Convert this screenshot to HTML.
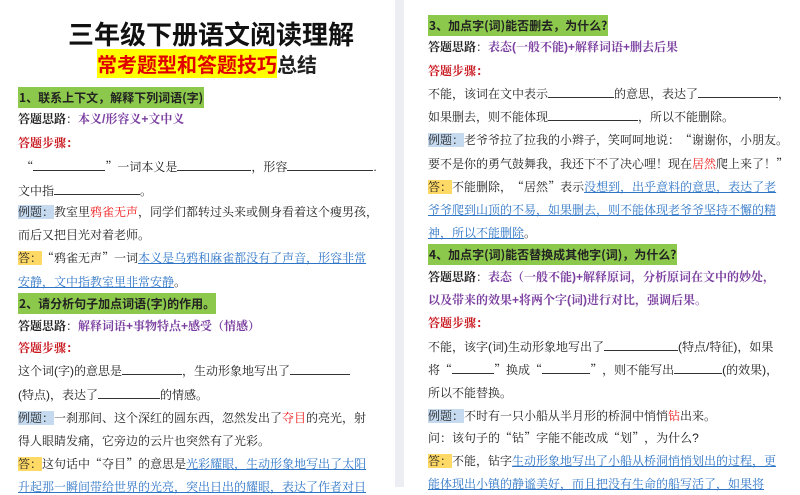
<!DOCTYPE html>
<html><head><meta charset="utf-8"><style>
*{margin:0;padding:0;box-sizing:border-box}
body{width:800px;height:487px;overflow:hidden;background:#fff;position:relative;font-family:"Liberation Sans","Noto Serif CJK SC","Noto Sans CJK SC",serif;font-size:12px;color:#222}
.gut{position:absolute;left:395px;top:0;width:9px;height:487px;background:#eceef3}
.l{position:absolute;white-space:nowrap;line-height:16px}
.L{left:18px}.R{left:428px}
.h{background:#8cc84b;font-weight:bold;font-family:"Noto Sans CJK SC",sans-serif;padding:2px 1px}
.p{color:#7b3fa0;font-weight:bold}
.r{color:#c8161d;font-weight:bold}
.red{color:#f01818}
.ex{background:#c5d9ef}
.an{background:#ffd966}
.b{color:#2e75c6;text-decoration:underline}
.u{display:inline-block;border-bottom:1px solid #333;height:12px;vertical-align:baseline}
.bd{font-weight:bold}
.q{font-family:"Noto Serif CJK SC",serif}
</style></head><body>
<div class="gut"></div>
<div class="l" style="left:68px;top:18px;font-size:26px;line-height:32px;font-weight:bold;font-family:'Noto Sans CJK SC',sans-serif;color:#111">三年级下册语文阅读理解</div>
<div class="l" style="left:97px;top:51px;font-size:20px;line-height:26px;font-weight:bold;font-family:'Noto Sans CJK SC',sans-serif"><span style="background:#ffff00;color:#e00000">常考题型和答题技巧</span>总结</div>
<div class="l L" style="top:90px"><span class="h">1、联系上下文，解释下列词语(字)</span></div>
<div class="l L" style="top:111px"><span class="bd">答题思路</span>：<span class="p">本义/形容义+文中义</span></div>
<div class="l L" style="top:135px"><span class="r">答题步骤：</span></div>
<div class="l L" style="top:159px">&nbsp;<span class="q">“</span><span class="u" style="width:72px"></span><span class="q">”</span>一词本义是<span class="u" style="width:74px"></span>，形容<span class="u" style="width:86px"></span>.</div>
<div class="l L" style="top:183px">文中指<span class="u" style="width:86px"></span>。</div>
<div class="l L" style="top:204px"><span class="ex">例题：</span>教室里<span class="red">鸦雀无声</span>，同学们都转过头来或侧身看着这个瘦男孩，</div>
<div class="l L" style="top:227px">而后又把目光对着老师。</div>
<div class="l L" style="top:250px"><span class="an">答：</span><span class="q">“</span>鸦雀无声<span class="q">”</span>一词<span class="b">本义是乌鸦和麻雀都没有了声音，形容非常</span></div>
<div class="l L" style="top:274px"><span class="b">安静，文中指教室里非常安静</span>。</div>
<div class="l L" style="top:296px"><span class="h">2、请分析句子加点词语(字)的作用。</span></div>
<div class="l L" style="top:318px"><span class="bd">答题思路</span>：<span class="p">解释词语+事物特点+感受（情感）</span></div>
<div class="l L" style="top:340px"><span class="r">答题步骤：</span></div>
<div class="l L" style="top:363px">这个词(字)的意思是<span class="u" style="width:60px"></span>，生动形象地写出了<span class="u" style="width:60px"></span></div>
<div class="l L" style="top:387px">(特点)，表达了<span class="u" style="width:62px"></span>的情感。</div>
<div class="l L" style="top:410px"><span class="ex">例题：</span>一刹那间、这个深红的圆东西，忽然发出了<span class="red">夺目</span>的亮光，射</div>
<div class="l L" style="top:433px">得人眼睛发痛，它旁边的云片也突然有了光彩。</div>
<div class="l L" style="top:456px"><span class="an">答：</span>这句话中<span class="q">“</span>夺目<span class="q">”</span>的意思是<span class="b">光彩耀眼，生动形象地写出了太阳</span></div>
<div class="l L" style="top:479px"><span class="b">升起那一瞬间带给世界的光亮，突出日出的耀眼，表达了作者对日</span></div>

<div class="l R" style="top:18px"><span class="h">3、加点字(词)能否删去，为什么?</span></div>
<div class="l R" style="top:39px"><span class="bd">答题思路</span>：<span class="p">表态(一般不能)+解释词语+删去后果</span></div>
<div class="l R" style="top:63px"><span class="r">答题步骤：</span></div>
<div class="l R" style="top:86px">不能，该词在文中表示<span class="u" style="width:66px"></span>的意思，表达了<span class="u" style="width:80px"></span>，</div>
<div class="l R" style="top:109px">如果删去，则不能体现<span class="u" style="width:90px"></span>，所以不能删除。</div>
<div class="l R" style="top:132px"><span class="ex">例题：</span>老爷爷拉了拉我的小辫子，笑呵呵地说：<span class="q">“</span>谢谢你，小朋友。</div>
<div class="l R" style="top:156px">要不是你的勇气鼓舞我，我还下不了决心哩！现在<span class="red">居然</span>爬上来了！<span class="q">”</span></div>
<div class="l R" style="top:179px"><span class="an">答：</span>不能删除，<span class="q">“</span>居然<span class="q">”</span>表示<span class="b">没想到，出乎意料的意思，表达了老</span></div>
<div class="l R" style="top:202px"><span class="b">爷爷爬到山顶的不易，如果删去，则不能体现老爷爷坚持不懈的精</span></div>
<div class="l R" style="top:225px"><span class="b">神，所以不能删除</span>。</div>
<div class="l R" style="top:247px"><span class="h">4、加点字(词)能否替换成其他字(词)，为什么?</span></div>
<div class="l R" style="top:269px"><span class="bd">答题思路</span>：<span class="p">表态（一般不能)+解释原词，分析原词在文中的妙处，</span></div>
<div class="l R" style="top:292px"><span class="p">以及带来的效果+将两个字(词)进行对比，强调后果。</span></div>
<div class="l R" style="top:315px"><span class="r">答题步骤：</span></div>
<div class="l R" style="top:339px">不能，该字(词)生动形象地写出了<span class="u" style="width:74px"></span>(特点/特征)，如果</div>
<div class="l R" style="top:362px">将<span class="q">“</span><span class="u" style="width:42px"></span><span class="q">”</span>换成<span class="q">“</span><span class="u" style="width:48px"></span><span class="q">”</span>，则不能写出<span class="u" style="width:48px"></span>(的效果)，</div>
<div class="l R" style="top:385px">所以不能替换。</div>
<div class="l R" style="top:408px"><span class="ex">例题：</span>不时有一只小船从半月形的桥洞中悄悄<span class="red">钻</span>出来。</div>
<div class="l R" style="top:430px">问：该句子的<span class="q">“</span>钻<span class="q">”</span>字能不能改成<span class="q">“</span>划<span class="q">”</span>，为什么?</div>
<div class="l R" style="top:453px"><span class="an">答：</span>不能，钻字<span class="b">生动形象地写出了小船从桥洞悄悄划出的过程，更</span></div>
<div class="l R" style="top:476px"><span class="b">能体现出小镇的静谧美好，而且把没有生命的船写活了，如果将</span></div>
</body></html>
